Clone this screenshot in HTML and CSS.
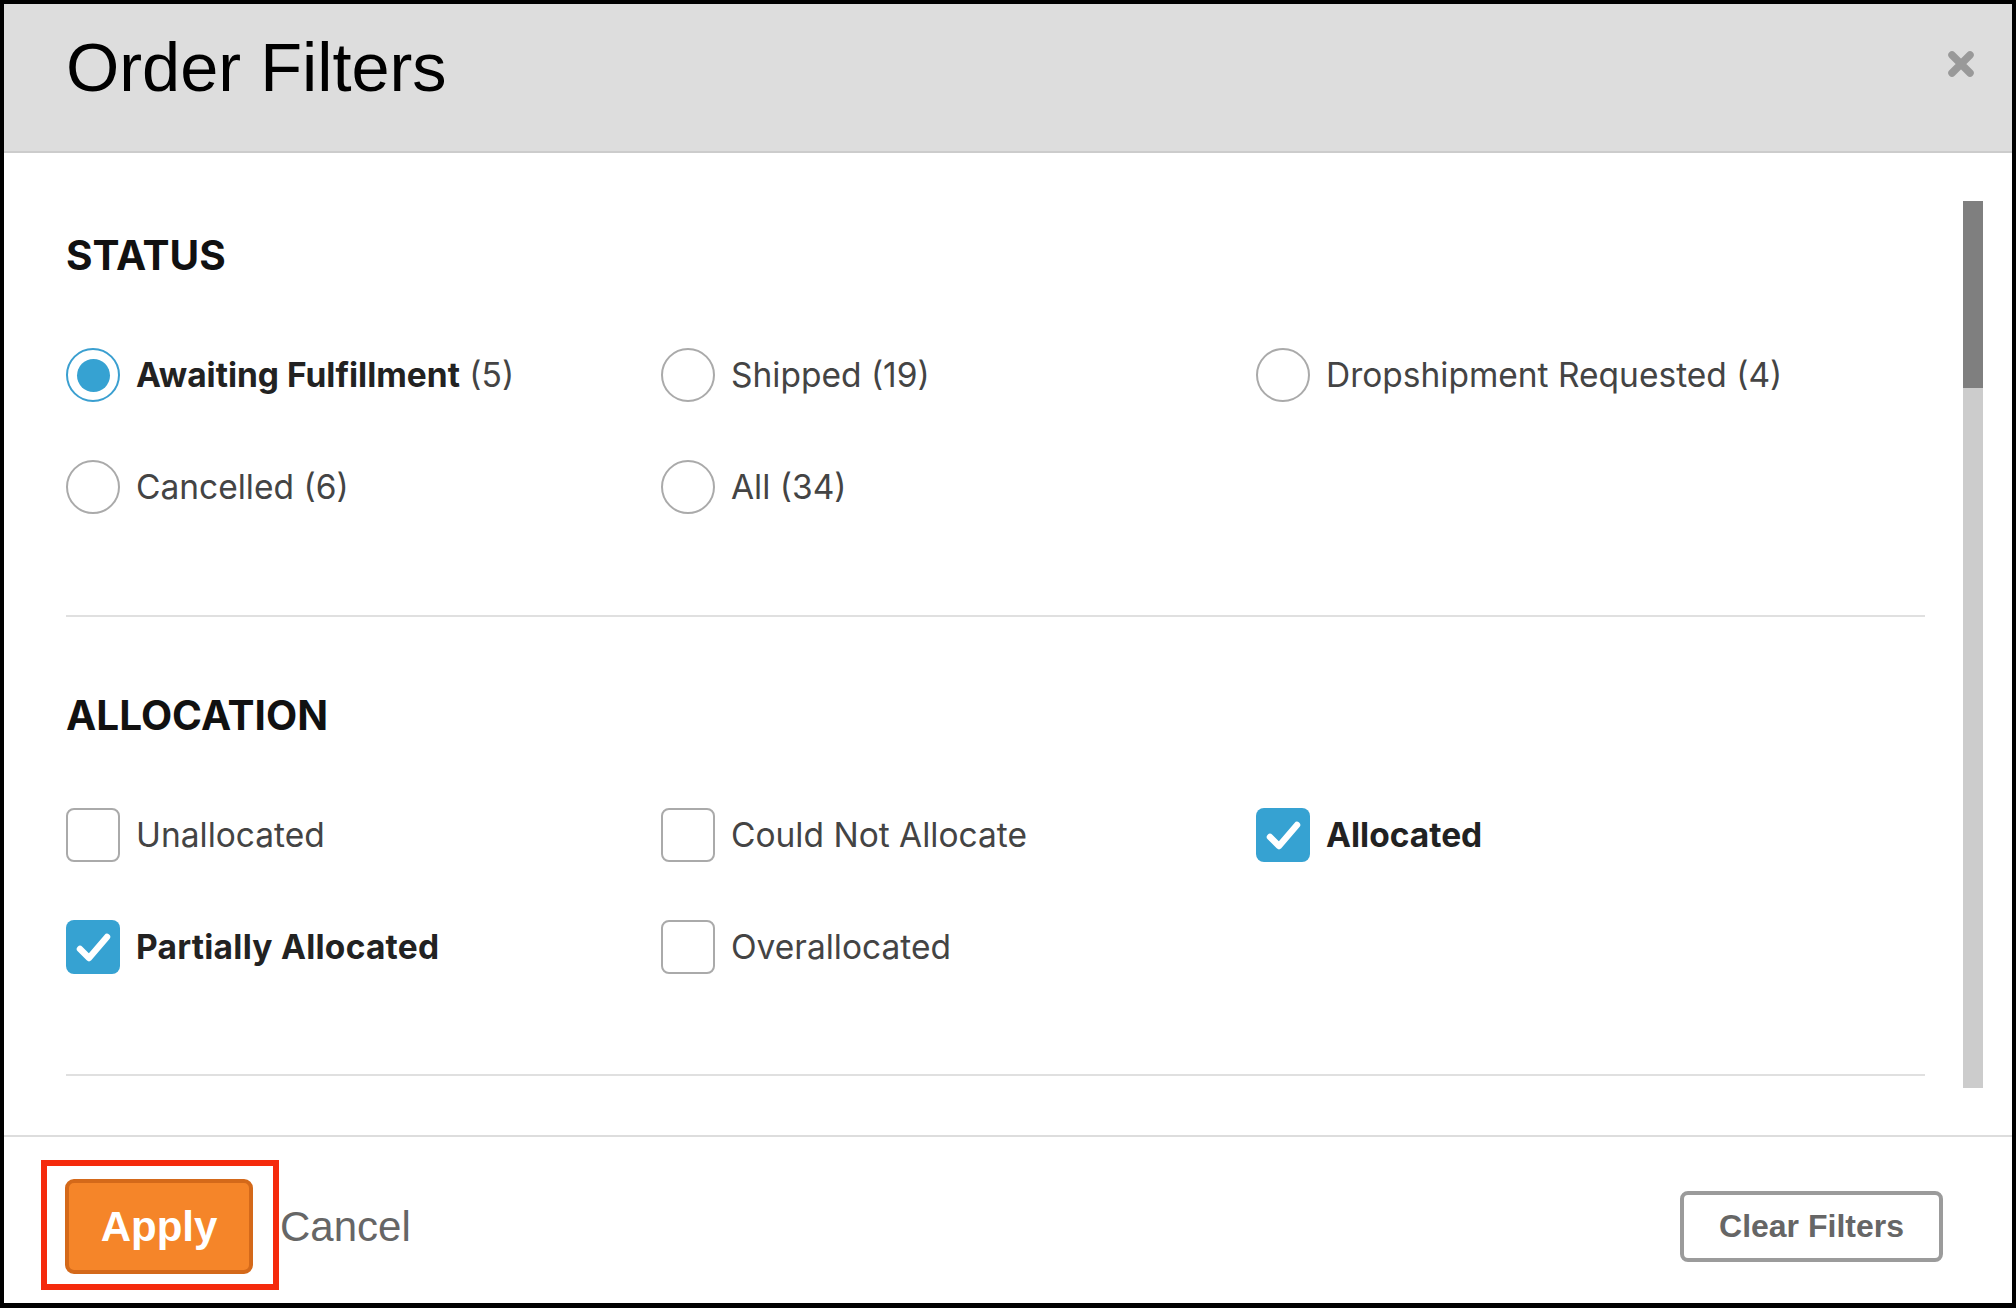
FILE: index.html
```html
<!DOCTYPE html>
<html lang="en">
<head>
<meta charset="utf-8">
<title>Order Filters</title>
<link rel="stylesheet" href="styles.css">
</head>
<body>
<div class="modal">
  <header class="modal-header">
    <h1 class="modal-title">Order Filters</h1>
    <button class="close-btn" aria-label="Close">
      <svg viewBox="0 0 28 28" width="28" height="28"><path d="M5 5L23 23M23 5L5 23" stroke="#999" stroke-width="7.5" stroke-linecap="round" fill="none"/></svg>
    </button>
  </header>
  <div class="modal-body">
    <div class="body-content">
      <section class="filter-section first">
        <h2 class="section-title">STATUS</h2>
        <div class="option-grid">
          <label class="option"><span class="radio checked"></span><span class="option-label"><b>Awaiting Fulfillment</b> (5)</span></label>
          <label class="option"><span class="radio"></span><span class="option-label">Shipped (19)</span></label>
          <label class="option"><span class="radio"></span><span class="option-label">Dropshipment Requested (4)</span></label>
          <label class="option"><span class="radio"></span><span class="option-label">Cancelled (6)</span></label>
          <label class="option"><span class="radio"></span><span class="option-label">All (34)</span></label>
        </div>
      </section>
      <section class="filter-section">
        <h2 class="section-title">ALLOCATION</h2>
        <div class="option-grid">
          <label class="option"><span class="checkbox"></span><span class="option-label">Unallocated</span></label>
          <label class="option"><span class="checkbox"></span><span class="option-label">Could Not Allocate</span></label>
          <label class="option"><span class="checkbox checked"><svg viewBox="0 0 54 54" width="54" height="54"><path d="M14 29L23 38L41 17" stroke="#fff" stroke-width="6.5" fill="none" stroke-linecap="round" stroke-linejoin="round"/></svg></span><span class="option-label"><b>Allocated</b></span></label>
          <label class="option"><span class="checkbox checked"><svg viewBox="0 0 54 54" width="54" height="54"><path d="M14 29L23 38L41 17" stroke="#fff" stroke-width="6.5" fill="none" stroke-linecap="round" stroke-linejoin="round"/></svg></span><span class="option-label"><b class="wide">Partially Allocated</b></span></label>
          <label class="option"><span class="checkbox"></span><span class="option-label">Overallocated</span></label>
        </div>
      </section>
    </div>
    <div class="scrollbar"><div class="scroll-thumb"></div></div>
  </div>
  <footer class="modal-footer">
    <div class="apply-wrap">
      <button class="btn-apply">Apply</button>
      <span class="highlight"></span>
    </div>
    <button class="btn-cancel">Cancel</button>
    <button class="btn-clear">Clear Filters</button>
  </footer>
</div>
</body>
</html>
```

FILE: styles.css
```css
* { box-sizing: border-box; }
html, body { margin: 0; padding: 0; background: #000; }
body { width: 2016px; height: 1308px; overflow: hidden; }

.modal {
  width: 2016px;
  height: 1308px;
  border: 4px solid #000;
  border-bottom-width: 5px;
  background: #fff;
  display: flex;
  flex-direction: column;
}

.modal-header {
  height: 149px;
  flex: none;
  background: #dddddd;
  border-bottom: 2px solid #cccccc;
  display: flex;
  justify-content: space-between;
  align-items: flex-start;
  padding: 0 37px 0 62px;
}
.modal-title {
  margin: 30px 0 0 0;
  font-family: "Liberation Sans", Arial, sans-serif;
  font-weight: 400;
  font-size: 68.5px;
  line-height: 68px;
  color: #000;
}
.close-btn {
  margin-top: 46px;
  padding: 0;
  border: 0;
  background: transparent;
  width: 28px;
  height: 28px;
  display: block;
}
.close-btn svg { display: block; }

.modal-body {
  flex: 1;
  display: flex;
  overflow: hidden;
}
.body-content {
  width: 1921px;
  padding-left: 62px;
  flex: none;
}
.filter-section {
  padding-top: 75px;
  padding-bottom: 100px;
  border-bottom: 2px solid #e0e0e0;
}
.filter-section.first { padding-top: 79px; padding-bottom: 101px; }

.section-title {
  margin: 0;
  font-family: Inter, "Noto Sans", sans-serif;
  font-weight: 700;
  font-size: 40.5px;
  line-height: 48px;
  color: #111;
}
.option-grid {
  margin-top: 68px;
  display: grid;
  grid-template-columns: 595px 595px 595px;
  grid-auto-rows: 54px;
  row-gap: 58px;
}
.option {
  display: flex;
  align-items: center;
  gap: 16px;
}
.option-label {
  font-family: Inter, "Noto Sans", sans-serif;
  font-size: 33.5px;
  color: #444;
  white-space: nowrap;
}
.option-label b { font-weight: 700; color: #222; }
.option-label b.wide { letter-spacing: 0.25px; }

.radio {
  width: 54px;
  height: 54px;
  flex: none;
  border: 2px solid #aaaaaa;
  border-radius: 50%;
  display: flex;
  align-items: center;
  justify-content: center;
}
.radio.checked { border-color: #3a9fd0; }
.radio.checked::after {
  content: "";
  width: 33px;
  height: 33px;
  border-radius: 50%;
  background: #36a2d2;
}
.checkbox {
  width: 54px;
  height: 54px;
  flex: none;
  border: 2px solid #aaaaaa;
  border-radius: 8px;
}
.checkbox.checked {
  border: 0;
  background: #36a2d2;
}
.checkbox svg { display: block; }

.scrollbar {
  margin-top: 48px;
  margin-left: 38px;
  width: 20px;
  height: 887px;
  background: #cccccc;
  flex: none;
}
.scroll-thumb {
  height: 187px;
  background: #7f7f7f;
}

.modal-footer {
  flex: none;
  height: 168px;
  border-top: 2px solid #dddddd;
  display: flex;
  align-items: center;
  padding: 41px 69px 28px 61px;
}
.apply-wrap { position: relative; }
.btn-apply {
  display: block;
  width: 188px;
  height: 95px;
  background: #f58529;
  border: 4px solid #d4691a;
  border-radius: 9px;
  color: #fff;
  font-family: "Liberation Sans", Arial, sans-serif;
  font-weight: 700;
  font-size: 42px;
  padding: 0;
}
.highlight {
  position: absolute;
  top: -19px;
  left: -24px;
  right: -26px;
  bottom: -16px;
  border: 6px solid #f52a0c;
  pointer-events: none;
}
.btn-cancel {
  margin-left: 27px;
  padding: 0;
  border: 0;
  background: transparent;
  font-family: "Liberation Sans", Arial, sans-serif;
  font-size: 42px;
  color: #666;
}
.btn-clear {
  margin-left: auto;
  width: 263px;
  height: 71px;
  background: #fff;
  border: 4px solid #9b9b9b;
  border-radius: 8px;
  color: #666;
  font-family: "Liberation Sans", Arial, sans-serif;
  font-weight: 700;
  font-size: 32px;
  padding: 0;
}
```
